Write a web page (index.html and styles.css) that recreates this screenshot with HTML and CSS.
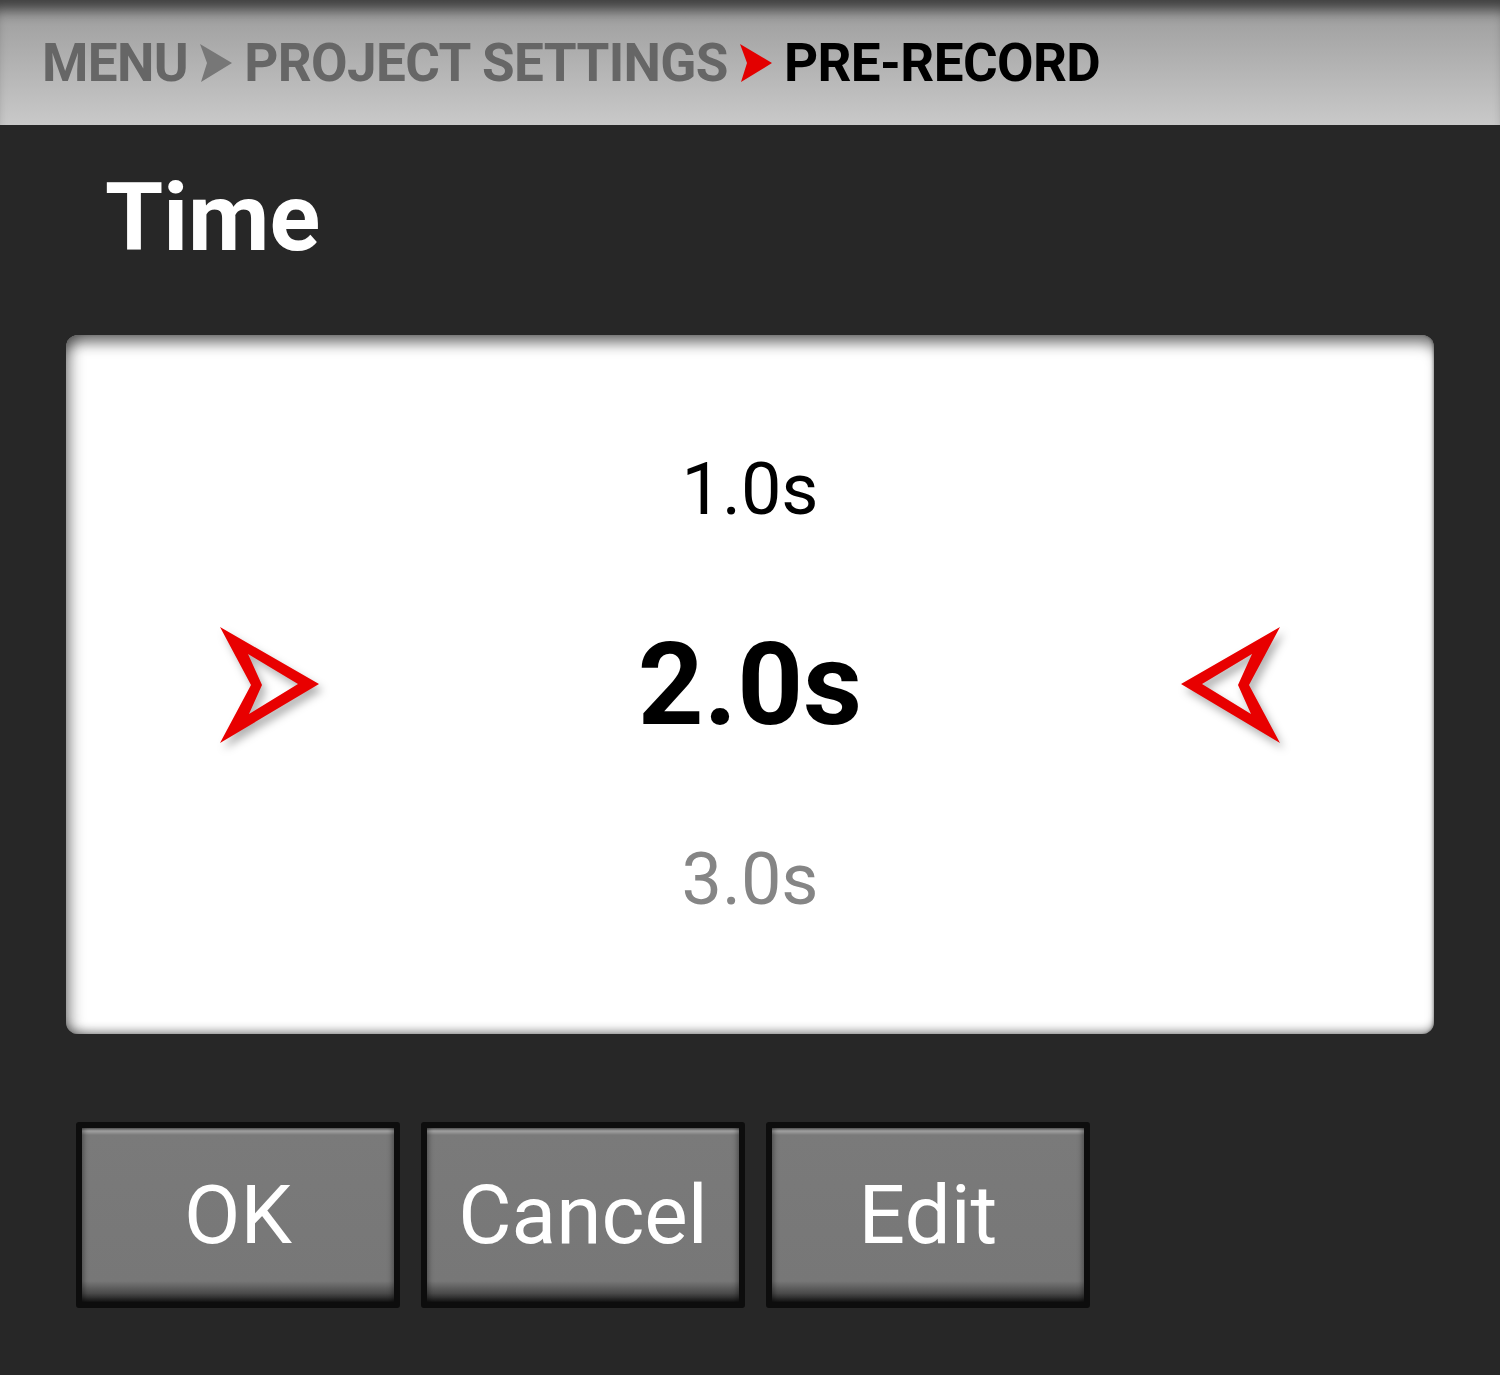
FILE: index.html
```html
<!DOCTYPE html>
<html lang="en">
<head>
    <meta charset="UTF-8">
    <title>Pre-Record Time</title>
    <link rel="stylesheet" href="styles.css">
</head>
<body>
    <div class="crumbs">
        <span class="crumb">MENU</span>
        <svg class="sep" viewBox="0 0 32 38"><path d="M0 0 L32 19 L1 38 L7 19 Z"/></svg>
        <span class="crumb">PROJECT SETTINGS</span>
        <svg class="sep sep-on" viewBox="0 0 32 38"><path d="M0 0 L32 19 L1 38 L7 19 Z"/></svg>
        <span class="crumb crumb-on">PRE-RECORD</span>
    </div>

    <h1 class="title">Time</h1>

    <div class="picker">
        <svg class="pick-arrow" viewBox="0 0 100 116">
            <path fill-rule="evenodd" d="M0 0 L99 57 L0 116 L31 58 Z M28 27 L42 58 L29 87 L78 57 Z"/>
        </svg>
        <div class="values">
            <div class="val val-prev">1.0s</div>
            <div class="val val-cur">2.0s</div>
            <div class="val val-next">3.0s</div>
        </div>
        <svg class="pick-arrow flip" viewBox="0 0 100 116">
            <path fill-rule="evenodd" d="M0 0 L99 57 L0 116 L31 58 Z M28 27 L42 58 L29 87 L78 57 Z"/>
        </svg>
    </div>

    <div class="actions">
        <button class="btn">OK</button>
        <button class="btn">Cancel</button>
        <button class="btn">Edit</button>
    </div>
</body>
</html>
```

FILE: styles.css
```css
body {
    margin: 0;
    background: #272727;
    font-family: 'Roboto', 'Liberation Sans', sans-serif;
    min-height: 1375px;
}
.crumbs {
    height: 125px;
    display: flex;
    align-items: center;
    gap: 12px;
    padding-left: 42px;
    box-sizing: border-box;
    background: linear-gradient(#9a9a9a, #a6a6a6 25%, #c9c9c9);
    box-shadow: inset 0 18px 14px -8px rgba(0, 0, 0, 0.6);
    font-size: 53px;
    font-weight: 700;
    letter-spacing: -0.6px;
    color: #666;
}
.crumb-on {
    color: #000;
}
.sep {
    width: 32px;
    height: 38px;
    fill: #777;
}
.sep-on {
    fill: #e30000;
}
.title {
    margin: 38px 0 62px;
    padding-left: 105px;
    font-size: 94px;
    line-height: 110px;
    font-weight: 700;
    color: #fff;
}
.picker {
    margin: 0 66px;
    height: 699px;
    background: #fff;
    border-radius: 12px;
    display: flex;
    align-items: center;
    justify-content: space-between;
    padding: 0 154px;
    box-sizing: border-box;
    box-shadow: inset 0 14px 14px -6px rgba(0, 0, 0, 0.55),
                inset 14px 0 14px -8px rgba(0, 0, 0, 0.35),
                inset 0 -8px 10px -5px rgba(0, 0, 0, 0.4),
                inset -2px 0 3px -1px rgba(0, 0, 0, 0.3);
}
.pick-arrow {
    width: 100px;
    height: 116px;
    fill: #e80000;
    filter: drop-shadow(4px 6px 4px rgba(0, 0, 0, 0.3));
}
.pick-arrow.flip {
    transform: scaleX(-1);
    filter: drop-shadow(-4px 6px 4px rgba(0, 0, 0, 0.3));
}
.values {
    display: flex;
    flex-direction: column;
    align-items: center;
    gap: 75px;
}
.val {
    font-size: 72px;
    line-height: 100px;
    color: #000;
}
.val-cur {
    font-size: 115px;
    line-height: 140px;
    font-weight: 700;
}
.val-next {
    color: #858585;
}
.actions {
    display: flex;
    gap: 21px;
    margin: 88px 0 0 76px;
}
.btn {
    width: 324px;
    height: 186px;
    border: 6px solid #0d0d0d;
    border-radius: 3px;
    background: linear-gradient(#5e5e5e 0, #a2a2a2 3px, #7a7a7a 7px, #777 88%, #4a4a4a 95%, #151515 100%);
    box-shadow: inset 4px 0 5px -2px rgba(0, 0, 0, 0.35),
                inset -4px 0 5px -2px rgba(0, 0, 0, 0.35);
    color: #fff;
    font-family: 'Roboto', 'Liberation Sans', sans-serif;
    font-size: 82px;
    padding: 0;
}
```
